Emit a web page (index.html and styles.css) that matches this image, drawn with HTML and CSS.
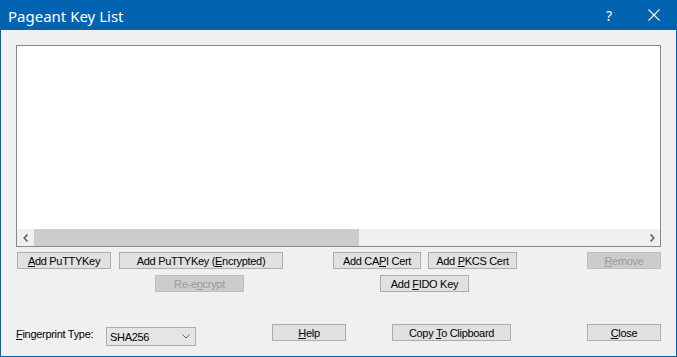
FILE: index.html
```html
<!DOCTYPE html>
<html lang="en">

<head>
    <meta charset="UTF-8">
    <title>Pageant Key List</title>
    <link rel="stylesheet" href="styles.css">
</head>

<body>
    <div class="window">
        <div class="titlebar">
            <span class="title">Pageant Key List</span>
            <span class="help-btn">?</span>
            <span class="close-btn">
                <svg width="12" height="12" viewBox="0 0 12 12"><path d="M0.5 0.5 L11.5 11.5 M11.5 0.5 L0.5 11.5" stroke="#fff" stroke-width="1.1" fill="none"/></svg>
            </span>
        </div>

        <div class="client">
            <div class="keylist">
                <div class="keylist-body"></div>
                <div class="hscroll">
                    <span class="arrow">
                        <svg width="6" height="8" viewBox="0 0 6 8"><path d="M4.5 0.5 L1.2 4 L4.5 7.5" stroke="#606060" stroke-width="1.6" fill="none"/></svg>
                    </span>
                    <span class="thumb"></span>
                    <span class="track"></span>
                    <span class="arrow">
                        <svg width="6" height="8" viewBox="0 0 6 8"><path d="M1.5 0.5 L4.8 4 L1.5 7.5" stroke="#606060" stroke-width="1.6" fill="none"/></svg>
                    </span>
                </div>
            </div>

            <div class="row row-one">
                <button class="btn w-add"><u>A</u>dd PuTTYKey</button>
                <button class="btn w-enc">Add PuTTYKey (<u>E</u>ncrypted)</button>
                <button class="btn w-capi">Add CA<u>P</u>I Cert</button>
                <button class="btn w-pkcs">Add <u>P</u>KCS Cert</button>
                <button class="btn w-remove" disabled><u>R</u>emove</button>
            </div>

            <div class="row row-two">
                <button class="btn w-reenc" disabled>Re-e<u>n</u>crypt</button>
                <button class="btn w-fido">Add <u>F</u>IDO Key</button>
            </div>

            <div class="row row-three">
                <span class="fp-label"><u>F</u>ingerprint Type:</span>
                <div class="combo">
                    <span>SHA256</span>
                    <svg width="8" height="5" viewBox="0 0 8 5"><path d="M0.5 0.5 L4 4 L7.5 0.5" stroke="#606060" stroke-width="1" fill="none"/></svg>
                </div>
                <button class="btn w-help"><u>H</u>elp</button>
                <button class="btn w-copy">Copy <u>T</u>o Clipboard</button>
                <button class="btn w-close"><u>C</u>lose</button>
            </div>
        </div>
    </div>
</body>

</html>
```

FILE: styles.css
```css
* {
    margin: 0;
    padding: 0;
    box-sizing: border-box;
}

body {
    width: 677px;
    height: 357px;
    overflow: hidden;
    background: #fff;
}

.window {
    width: 677px;
    height: 357px;
    background: #0063b1;
    padding: 0 1px 1px 1px;
    display: flex;
    flex-direction: column;
}

.titlebar {
    height: 30px;
    display: flex;
    align-items: center;
    color: #fff;
    margin: 0 -1px;
}

.title {
    font-family: "Noto Sans", "Open Sans", sans-serif;
    font-size: 15px;
    margin-left: 8px;
    margin-top: 1px;
}

.help-btn {
    margin-left: auto;
    font-family: "Noto Sans", sans-serif;
    font-size: 14px;
    margin-right: 36px;
}

.close-btn {
    display: flex;
    margin-right: 17px;
}

.client {
    flex: 1;
    background: #f0f0f0;
    padding: 15px 0 0 15px;
    font-family: "Liberation Sans", Arial, sans-serif;
    font-size: 11px;
    letter-spacing: -0.3px;
    color: #000;
}

.keylist {
    width: 645px;
    height: 202px;
    border: 1px solid #828790;
    background: #fff;
    display: flex;
    flex-direction: column;
}

.keylist-body {
    flex: 1;
}

.hscroll {
    height: 17px;
    display: flex;
    background: #f0f0f0;
}

.hscroll .arrow {
    width: 17px;
    display: flex;
    align-items: center;
    justify-content: center;
}

.hscroll .thumb {
    width: 325px;
    background: #cdcdcd;
}

.hscroll .track {
    flex: 1;
}

.row {
    display: flex;
    padding-left: 1px;
}

.btn {
    height: 17px;
    background: #e1e1e1;
    border: 1px solid #adadad;
    font: inherit;
    letter-spacing: inherit;
    color: #000;
    line-height: 14px;
}

.btn[disabled] {
    background: #cccccc;
    border-color: #bfbfbf;
    color: #9a9a9a;
}

.row-one {
    margin-top: 5px;
}

.w-add { width: 94px; }
.w-enc { width: 164px; margin-left: 8px; }
.w-capi { width: 88px; margin-left: 50px; }
.w-pkcs { width: 89px; margin-left: 7px; }
.w-remove { width: 74px; margin-left: 70px; }

.row-two {
    margin-top: 6px;
}

.w-reenc { width: 89px; margin-left: 138px; }
.w-fido { width: 89px; margin-left: 136px; }

.row-three {
    margin-top: 32px;
    align-items: flex-start;
}

.fp-label {
    width: 90px;
    margin-left: -1px;
    padding-top: 4px;
}

.combo {
    width: 90px;
    height: 19px;
    margin-top: 3px;
    border: 1px solid #adadad;
    background: #e5e5e5;
    display: flex;
    align-items: center;
    justify-content: space-between;
    padding: 0 5px 0 3px;
}

.w-help { width: 74px; margin-left: 76px; }
.w-copy { width: 119px; margin-left: 46px; }
.w-close { width: 74px; margin-left: 76px; }
```
